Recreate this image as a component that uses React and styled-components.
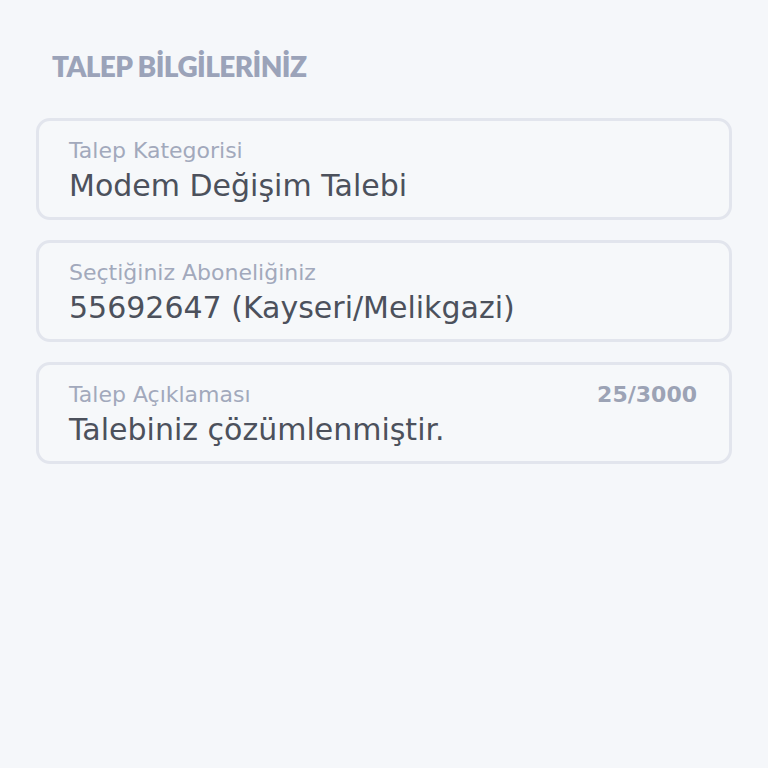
import React from "react";
import styled, { createGlobalStyle } from "styled-components";

const GlobalStyle = createGlobalStyle`
  html, body {
    margin: 0;
    padding: 0;
    background: #f5f7fa;
    font-family: "DejaVu Sans", "Noto Sans", sans-serif;
  }
`;

const Page = styled.main`
  min-height: 768px;
  box-sizing: border-box;
  padding: 49px 36px 0 36px;
  background: #f5f7fa;
`;

const Title = styled.h2`
  margin: 0 0 35px 16px;
  font-family: "Lato", sans-serif;
  font-size: 28px;
  line-height: 34px;
  font-weight: 800;
  color: #9ba3b9;
  letter-spacing: -0.6px;
`;

const List = styled.div`
  display: flex;
  flex-direction: column;
  gap: 20px;
`;

const Card = styled.div`
  box-sizing: border-box;
  height: 102px;
  border: 3px solid #e2e5ed;
  border-radius: 14px;
  padding: 16px 32px 0 30px;
  background: #f6f8fa;
`;

const Head = styled.div`
  display: flex;
  justify-content: space-between;
  align-items: baseline;
  line-height: 28px;
`;

const Label = styled.span`
  font-size: 22px;
  color: #a2a9bc;
`;

const Counter = styled.span`
  font-size: 22px;
  font-weight: 700;
  color: #9ca3b5;
`;

const Value = styled.div`
  margin-top: 3px;
  line-height: 36px;
  font-size: 30px;
  color: #4c515c;
`;

const fields = [
  { label: "Talep Kategorisi", value: "Modem Değişim Talebi" },
  { label: "Seçtiğiniz Aboneliğiniz", value: "55692647 (Kayseri/Melikgazi)" },
  { label: "Talep Açıklaması", value: "Talebiniz çözümlenmiştir.", counter: "25/3000" },
];

export default function App() {
  return (
    <>
      <GlobalStyle />
      <Page>
        <Title>TALEP BİLGİLERİNİZ</Title>
        <List>
          {fields.map((f) => (
            <Card key={f.label}>
              <Head>
                <Label>{f.label}</Label>
                {f.counter && <Counter>{f.counter}</Counter>}
              </Head>
              <Value>{f.value}</Value>
            </Card>
          ))}
        </List>
      </Page>
    </>
  );
}
